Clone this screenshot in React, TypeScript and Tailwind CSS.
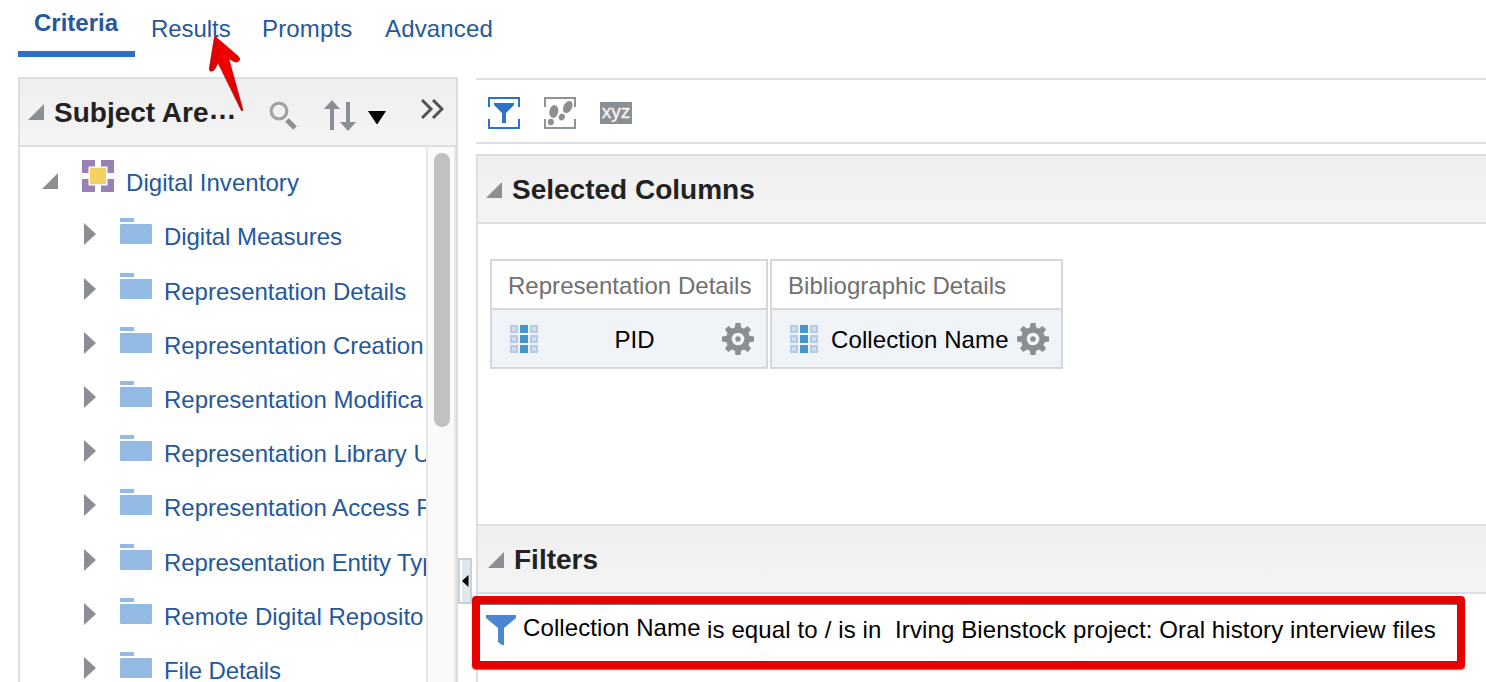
import React from "react";

const folders: { name: string; height: string; tracking: string }[] = [
  { name: "Digital Measures", height: "h-[55px]", tracking: "tracking-[-0.05px]" },
  { name: "Representation Details", height: "h-[54px]", tracking: "tracking-[-0.03px]" },
  { name: "Representation Creation", height: "h-[54px]", tracking: "tracking-[-0.03px]" },
  { name: "Representation Modifica", height: "h-[54px]", tracking: "tracking-normal" },
  { name: "Representation Library U", height: "h-[54px]", tracking: "tracking-normal" },
  { name: "Representation Access R", height: "h-[55px]", tracking: "tracking-normal" },
  { name: "Representation Entity Typ", height: "h-[54px]", tracking: "tracking-[-0.12px]" },
  { name: "Remote Digital Reposito", height: "h-[54px]", tracking: "tracking-[0.03px]" },
  { name: "File Details", height: "h-[54px]", tracking: "tracking-[-0.15px]" },
];

function OpenCaret({ className = "" }: { className?: string }) {
  return (
    <svg className={`shrink-0 ${className}`} width="16" height="16" viewBox="0 0 16 16">
      <path d="M16 0V16H0Z" fill="#8b8f93" />
    </svg>
  );
}

function SubjectIcon() {
  return (
    <svg className="mt-[13px] ml-6 shrink-0" width="32" height="32" viewBox="0 0 32 32">
      <path d="M0 0H13V8H8V13H0ZM19 0H32V13H24V8H19ZM0 19H8V24H13V32H0ZM24 19H32V32H19V24H24Z" fill="#9a80b5" />
      <rect x="6.5" y="6.5" width="19" height="19" fill="#fff" />
      <rect x="8" y="8" width="16" height="16" fill="#f5cf60" />
    </svg>
  );
}

function FolderIcon() {
  return (
    <svg className="mt-[9px] ml-6 shrink-0" width="32" height="27" viewBox="0 0 32 27">
      <rect width="14" height="4" fill="#92bae3" />
      <rect y="6" width="32" height="20" rx="1" fill="#92bae3" />
    </svg>
  );
}

function ColumnIcon() {
  return (
    <svg className="shrink-0" width="28" height="28" viewBox="0 0 28 28">
      {[0, 10, 20].map((y) => (
        <g key={y}>
          <rect x="1" y={y + 1} width="6" height="6" fill="#cfdff0" stroke="#b5cbe5" strokeWidth="2" />
          <rect x="10" y={y} width="8" height="8" fill="#4596cf" />
          <rect x="21" y={y + 1} width="6" height="6" fill="#cfdff0" stroke="#b5cbe5" strokeWidth="2" />
        </g>
      ))}
    </svg>
  );
}

function GearIcon() {
  return (
    <svg className="shrink-0" width="32" height="32" viewBox="0 0 32 32">
      <g fill="#8b8f93">
        {[0, 45, 90, 135].map((a) => (
          <path key={a} d="M13.500 0H18.500L19.500 7V25L18.500 32H13.500L12.500 25V7Z" transform={`rotate(${a} 16 16)`} />
        ))}
        <circle cx="16" cy="16" r="12" />
      </g>
      <circle cx="16" cy="16" r="6.3" fill="#f0f3f8" />
      <circle cx="16" cy="16" r="2.7" fill="#8b8f93" />
    </svg>
  );
}

function Brackets({ color }: { color: string }) {
  return <path d="M1 10V1H31V10M1 22V31H31V22" fill="none" stroke={color} strokeWidth="2" />;
}

function SectionHeader({ title, className }: { title: string; className: string }) {
  return (
    <div className={`flex h-[70px] shrink-0 border-y-2 border-[#dadfe3] bg-linear-to-b from-[#efefef] to-[#f4f4f4] ${className}`}>
      <OpenCaret className="mt-[26px]" />
      <h2 className="mt-[18px] ml-[10px] text-[28px] leading-8 font-bold text-[#222]">{title}</h2>
    </div>
  );
}

function ColumnCard({ table, column, className, labelClass }: { table: string; column: string; className: string; labelClass: string }) {
  return (
    <div className={`h-[110px] border-2 border-[#d6d7dc] ${className}`}>
      <div className="h-[49px] border-b-2 border-[#d6d7dc] pt-[11px] pl-4 leading-7 tracking-[0.03px] text-[#707070]">{table}</div>
      <div className="flex h-[57px] items-center bg-[#f0f3f8] pt-px pr-3 pl-[18px]">
        <ColumnIcon />
        <span className={`pt-px leading-7 whitespace-nowrap text-black ${labelClass}`}>{column}</span>
        <GearIcon />
      </div>
    </div>
  );
}

export default function App() {
  return (
    <div className="relative flex h-[682px] w-[1486px] flex-col overflow-hidden bg-white font-['Liberation_Sans',Arial,sans-serif] text-[24px] text-[#25589b]">
      <nav className="flex h-[77px] shrink-0 pl-[18px] leading-7">
        <div className="h-[57px] w-[117px] border-b-[6px] border-[#2d6fc8] pt-[9px] pl-4 font-bold">Criteria</div>
        <div className="mt-[15px] ml-4 w-[111px] tracking-[-0.05px]">Results</div>
        <div className="mt-[15px] w-[123px] tracking-[0.15px]">Prompts</div>
        <div className="mt-[15px] tracking-[0.15px]">Advanced</div>
      </nav>
      <div className="flex min-h-0 flex-1">
        <aside className="ml-[18px] flex w-[440px] shrink-0 flex-col border-x-2 border-t-2 border-[#dadfe3]">
          <div className="flex h-[68px] shrink-0 border-b-2 border-[#dadfe3] bg-linear-to-b from-[#efefef] to-[#f4f4f4] pl-2">
            <OpenCaret className="mt-[25px]" />
            <h2 className="mt-[18px] ml-[10px] w-[213px] text-[28px] leading-8 font-bold whitespace-nowrap text-[#222]">
              Subject Are<span className="inline-block -translate-y-[3px]">…</span>
            </h2>
            <svg className="mt-[22px] ml-[2px] shrink-0" width="28" height="30" viewBox="0 0 28 30">
              <circle cx="10" cy="10" r="7.8" fill="none" stroke="#a0a3a6" strokeWidth="3.2" />
              <path d="M18 19L26 27" stroke="#8b8f93" strokeWidth="5" />
            </svg>
            <svg className="mt-[21px] ml-[27px] shrink-0" width="32" height="32" viewBox="0 0 32 32">
              <path d="M8 0L16 9H10V30H6V9H0ZM22 2H26V22H32L24 31L16 22H22Z" fill="#8b8f93" />
            </svg>
            <svg className="mt-8 ml-3 shrink-0" width="18" height="13" viewBox="0 0 18 13">
              <path d="M0 0H18L9.500 13H8.500Z" fill="#000" />
            </svg>
            <svg className="mt-5 ml-[35px] shrink-0" width="23" height="20" viewBox="0 0 23 20">
              <path d="M1 1L10 10L1 19M12 1L21 10L12 19" fill="none" stroke="#505356" strokeWidth="3" />
            </svg>
          </div>
          <div className="flex min-h-0 flex-1">
            <div className="w-[406px] overflow-hidden leading-7 whitespace-nowrap">
              <div className="flex h-[62px] pl-[22px]">
                <OpenCaret className="mt-[26px]" />
                <SubjectIcon />
                <span className="mt-[22px] ml-3 tracking-[0.05px]">Digital Inventory</span>
              </div>
              {folders.map((f) => (
                <div key={f.name} className={`flex pl-16 ${f.height}`}>
                  <svg className="mt-[14px] shrink-0" width="12" height="22" viewBox="0 0 12 22">
                    <path d="M0 0L12 11L0 22Z" fill="#8b8f93" />
                  </svg>
                  <FolderIcon />
                  <span className={`mt-[14px] ml-3 ${f.tracking}`}>{f.name}</span>
                </div>
              ))}
            </div>
            <div className="w-[30px] border-x-2 border-[#e8e8e8] bg-[#fafafa] pt-[6px] pl-[6px]">
              <div className="h-[274px] w-4 rounded-full bg-[#c1c1c1]" />
            </div>
          </div>
        </aside>
        <div className="w-[18px] shrink-0 pt-[481px]">
          <div className="flex h-[46px] w-[14px] items-center border-2 border-[#c8d1d8] bg-[#e2e7eb]">
            <div className="h-full w-[2px] bg-white" />
            <svg width="7" height="12" viewBox="0 0 7 12">
              <path d="M6.500 0V12L0 6Z" fill="#000" />
            </svg>
          </div>
        </div>
        <main className="flex min-w-0 flex-1 flex-col pt-px">
          <div className="mb-[10px] flex h-[66px] shrink-0 border-y-2 border-[#dadfe3] pt-[17px] pl-3">
            <svg width="32" height="32" viewBox="0 0 32 32">
              <Brackets color="#2f70c9" />
              <path d="M6 6H26V8L18 16V26H14V16L6 8Z" fill="#2f70c9" />
            </svg>
            <svg className="ml-6" width="32" height="32" viewBox="0 0 32 32">
              <Brackets color="#909396" />
              <g fill="#8b8f93">
                <ellipse cx="9.800" cy="14.500" rx="4.400" ry="6.500" transform="rotate(12 9.800 14.500)" />
                <ellipse cx="6.800" cy="25" rx="3" ry="3.300" />
                <ellipse cx="23.800" cy="10" rx="4.200" ry="6.500" transform="rotate(28 23.800 10)" />
                <ellipse cx="17.800" cy="20" rx="3" ry="3.400" transform="rotate(30 17.800 20)" />
              </g>
            </svg>
            <div className="mt-[5px] ml-6 h-[22px] w-8 bg-[#8b8f93] text-center text-[19px] leading-[20px] text-[#f4f4f4] [-webkit-text-stroke:0.4px_#f4f4f4]">xyz</div>
          </div>
          <div className="flex min-h-0 flex-1 flex-col border-l-2 border-[#dadfe3]">
            <SectionHeader title="Selected Columns" className="pl-2" />
            <div className="flex h-[300px] shrink-0 gap-[2px] pt-[35px] pl-3">
              <ColumnCard table="Representation Details" column="PID" className="w-[278px]" labelClass="flex-1 pl-[9px] text-center" />
              <ColumnCard table="Bibliographic Details" column="Collection Name" className="w-[293px]" labelClass="flex-1 pl-[13px] tracking-[0.1px]" />
            </div>
            <SectionHeader title="Filters" className="pl-[10px]" />
            <div className="flex pl-2 leading-7 whitespace-nowrap text-black">
              <svg className="mt-[21px] shrink-0" width="30" height="30" viewBox="0 0 30 30">
                <path d="M0 0H30V3L18 13V30H16L12 27V13L0 3Z" fill="#4b86d3" />
              </svg>
              <span className="mt-5 ml-[7px] w-[184px] tracking-[0.1px]">Collection Name</span>
              <span className="mt-[22px] w-[188px] tracking-[0.13px]">is equal to / is in</span>
              <span className="mt-[22px] tracking-[0.11px]">Irving Bienstock project: Oral history interview files</span>
            </div>
          </div>
        </main>
      </div>
      <div className="absolute top-[596px] left-[472px] h-[73px] w-[993px] rounded-[4px] border-8 border-[#e60000] shadow-[0_1px_1px_#777,inset_0_1px_0_#777]" />
      <svg className="absolute top-[34px] left-[205px]" width="42" height="80" viewBox="0 0 42 80">
        <defs>
          <linearGradient id="arrow" x1="0" y1="0" x2="1" y2="0">
            <stop offset="0" stopColor="#d90000" />
            <stop offset=".5" stopColor="#f50000" />
            <stop offset="1" stopColor="#d00000" />
          </linearGradient>
        </defs>
        <path d="M9.500 2Q10 2 11 3L33 22Q36 25 34 27Q32 29 29 27.500L24 25L38 76Q37 78 36 76L13 29L10 35Q8 38 5 37Q4 36 4.500 33Z" fill="url(#arrow)" stroke="#a00000" strokeWidth=".5" strokeLinejoin="round" />
      </svg>
    </div>
  );
}
